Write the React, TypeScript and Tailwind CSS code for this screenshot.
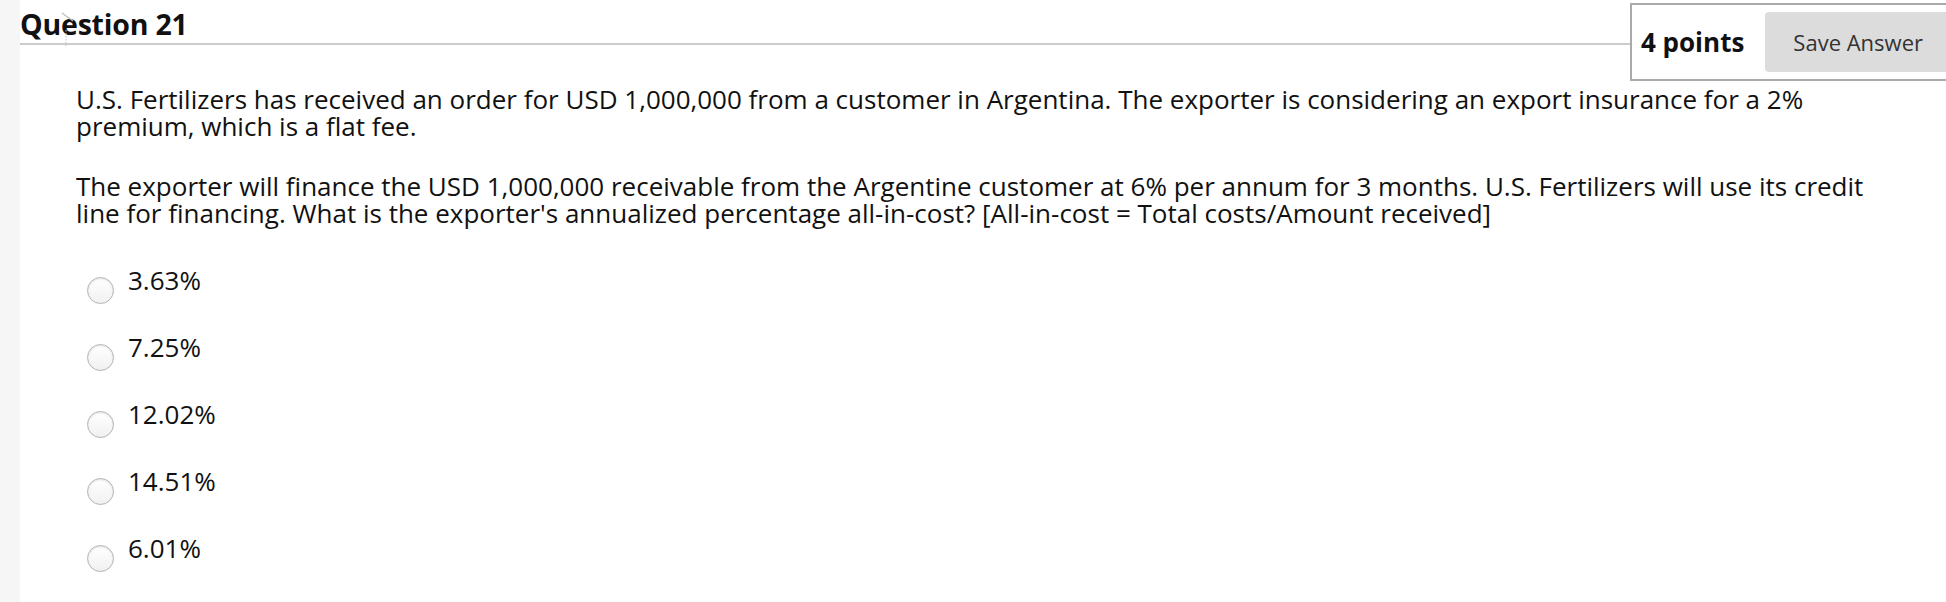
const OPTIONS = ["3.63%", "7.25%", "12.02%", "14.51%", "6.01%"];

function Radio() {
  return (
    <span className="block w-[27px] h-[27px] shrink-0 rounded-full border border-[#b4b4b4] bg-gradient-to-b from-white to-[#f1f1f1] shadow-[inset_0_1px_2px_rgba(0,0,0,0.12)]" />
  );
}

export default function App() {
  return (
    <div className="min-h-[602px] w-full overflow-hidden bg-white text-[#111] font-['Open_Sans',sans-serif]">
      <div className="flex min-h-[602px]">
        {/* left gutter */}
        <div className="w-[20px] shrink-0 bg-[#f6f6f6]" />

        <div className="relative flex-1 min-w-0">
          {/* header */}
          <div className="flex items-start">
            <div className="flex-1 min-w-0 h-[45px] pt-[6px] border-b-2 border-[#cccccc]">
              <h2 className="text-[28.5px] leading-[37px] font-bold tracking-[-0.2px]">Question 21</h2>
            </div>
            <div className="mt-[3px] mr-[-14px] shrink-0 flex items-center gap-[21px] border-2 border-[#aaaaaa] py-[7px] pl-[9px] pr-[7px] bg-white">
              <span className="text-[26px] font-bold leading-none">4 points</span>
              <button className="h-[60px] px-[28px] rounded-[4px] bg-[#dcdcdc] text-[22px] text-[#333] leading-none">
                Save Answer
              </button>
            </div>
          </div>

          {/* cursor artifact */}
          <svg className="absolute left-[22px] top-[10px] pointer-events-none" width="40" height="40" viewBox="0 0 40 40">
            <line x1="20" y1="3" x2="31" y2="11" stroke="#bdbdbd" strokeWidth="1.2" />
            <line x1="24" y1="20" x2="24" y2="36" stroke="#c4c4c4" strokeWidth="1" strokeDasharray="1.5 1.5" />
          </svg>

          {/* body */}
          <div className="pl-[56px] pr-[62px] pt-[5px] text-[26px] leading-[27px]">
            <p>
              U.S. Fertilizers has received an order for USD 1,000,000 from a customer in Argentina. The exporter is
              considering an export insurance for a 2% premium, which is a flat fee.
            </p>
            <p className="mt-[33px]">
              The exporter will finance the USD 1,000,000 receivable from the Argentine customer at 6% per annum for 3
              months. U.S. Fertilizers will use its credit line for financing. What is the exporter's annualized
              percentage all-in-cost? [All-in-cost = Total costs/Amount received]
            </p>

            <ul className="mt-[40px] pl-[11px]">
              {OPTIONS.map((o) => (
                <li key={o} className="flex items-start gap-[14px] h-[67px]">
                  <span className="mt-[10px]">
                    <Radio />
                  </span>
                  <span>{o}</span>
                </li>
              ))}
            </ul>
          </div>
        </div>
      </div>
    </div>
  );
}
